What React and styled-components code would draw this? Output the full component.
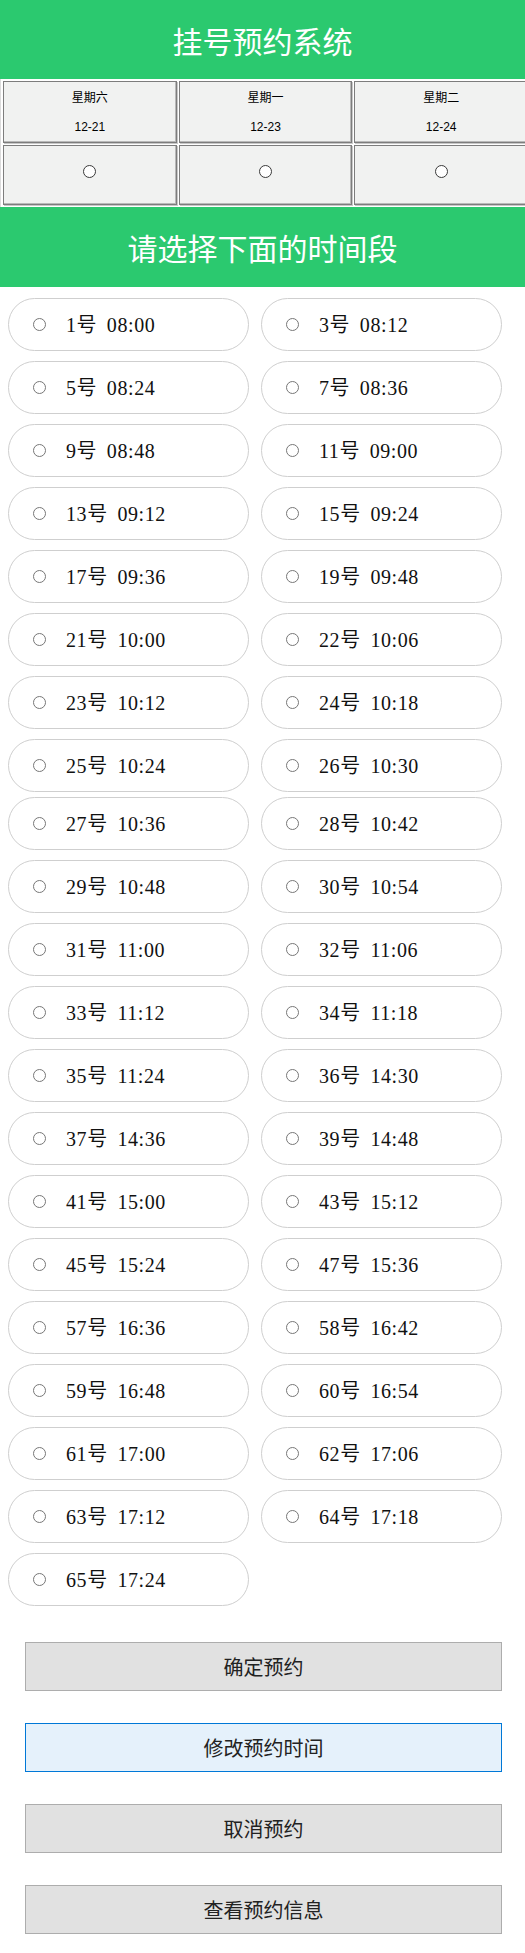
import React from "react";
import styled, { createGlobalStyle } from "styled-components";

const GlobalStyle = createGlobalStyle`
  html, body {
    margin: 0;
    padding: 0;
    background: #ffffff;
    overflow-x: hidden;
  }
  body {
    font-family: "Noto Sans CJK SC", "Liberation Sans", sans-serif;
  }
`;

const GREEN = "#2bc96f";

const Page = styled.div`
  width: 525px;
  padding-bottom: 20px;
`;

const Banner = styled.header`
  height: ${(p) => p.$h}px;
  background: ${GREEN};
  display: flex;
  align-items: center;
  justify-content: center;
  color: #ffffff;
  font-family: "Noto Sans CJK SC", sans-serif;
  font-size: 30px;
  font-weight: 400;
  letter-spacing: 0;
`;

const TableWrap = styled.div`
  width: 525px;
  overflow: hidden;
`;

const DayTable = styled.table`
  width: 530px;
  table-layout: fixed;
  border-collapse: separate;
  border-spacing: 2px;
  border-left: 1px solid #dcdcdc;
  background: #ffffff;
`;

const Cell = styled.td`
  height: ${(p) => p.$h}px;
  box-sizing: border-box;
  background: #f1f2f1;
  border: 1px solid #7d7d7d;
  box-shadow: inset -1px -1px 0 #b9b9b9, 1px 1px 0 #c8c8c8;
  text-align: center;
  vertical-align: middle;
  padding: 0;
  font-size: 12px;
  color: #000;
`;

const DayName = styled.div`
  font-family: "Noto Sans CJK SC", sans-serif;
  line-height: 15.5px;
  margin-bottom: 15.5px;
`;

const DayDate = styled.div`
  font-family: "Liberation Sans", sans-serif;
  line-height: 15.5px;
`;

const DayRadio = styled.input.attrs({ type: "radio" })`
  appearance: none;
  -webkit-appearance: none;
  width: 13px;
  height: 13px;
  box-sizing: border-box;
  border: 1.4px solid #3a3a3a;
  border-radius: 50%;
  background: #fff;
  margin: 0 0 8px 0;
  vertical-align: middle;
`;

const SlotGrid = styled.div`
  display: grid;
  grid-template-columns: 241px 241px;
  column-gap: 12px;
  padding: 11px 0 0 8px;
`;

const Slot = styled.label`
  height: 53px;
  box-sizing: border-box;
  border: 1px solid #cfcfcf;
  border-radius: 27px;
  margin-bottom: ${(p) => (p.$tight ? 5 : 10)}px;
  display: flex;
  align-items: center;
  padding-left: 24px;
  background: #fff;
  cursor: pointer;
`;

const SlotRadio = styled.input.attrs({ type: "radio" })`
  appearance: none;
  -webkit-appearance: none;
  width: 13px;
  height: 13px;
  box-sizing: border-box;
  border: 1.5px solid #777777;
  border-radius: 50%;
  background: #fff;
  margin: 0 20px 0 0;
  flex: none;
`;

const SlotText = styled.span`
  font-family: "Liberation Serif", "Noto Sans CJK SC", serif;
  font-size: 20px;
  color: #111;
  letter-spacing: 0.6px;
  word-spacing: 4px;
  white-space: pre;
  line-height: 1;
`;

const Actions = styled.div`
  display: flex;
  flex-direction: column;
  gap: 32px;
  margin-top: 26px;
  padding-left: 25px;
`;

const ActionButton = styled.button`
  width: 477px;
  height: 49px;
  box-sizing: border-box;
  border: 1px solid ${(p) => (p.$active ? "#0078d7" : "#adadad")};
  background: ${(p) => (p.$active ? "#e5f1fb" : "#e1e1e1")};
  font-family: "Noto Sans CJK SC", sans-serif;
  font-size: 20px;
  color: #222;
  padding: 0;
  cursor: pointer;
`;

const days = [
  { name: "星期六", date: "12-21" },
  { name: "星期一", date: "12-23" },
  { name: "星期二", date: "12-24" },
];

const slots = [
  [1, "08:00"], [3, "08:12"],
  [5, "08:24"], [7, "08:36"],
  [9, "08:48"], [11, "09:00"],
  [13, "09:12"], [15, "09:24"],
  [17, "09:36"], [19, "09:48"],
  [21, "10:00"], [22, "10:06"],
  [23, "10:12"], [24, "10:18"],
  [25, "10:24"], [26, "10:30"],
  [27, "10:36"], [28, "10:42"],
  [29, "10:48"], [30, "10:54"],
  [31, "11:00"], [32, "11:06"],
  [33, "11:12"], [34, "11:18"],
  [35, "11:24"], [36, "14:30"],
  [37, "14:36"], [39, "14:48"],
  [41, "15:00"], [43, "15:12"],
  [45, "15:24"], [47, "15:36"],
  [57, "16:36"], [58, "16:42"],
  [59, "16:48"], [60, "16:54"],
  [61, "17:00"], [62, "17:06"],
  [63, "17:12"], [64, "17:18"],
  [65, "17:24"],
];

const actions = ["确定预约", "修改预约时间", "取消预约", "查看预约信息"];

export default function App() {
  return (
    <Page>
      <GlobalStyle />
      <Banner $h={79}>挂号预约系统</Banner>
      <TableWrap>
        <DayTable>
          <tbody>
            <tr>
              {days.map((d) => (
                <Cell key={d.date} $h={62}>
                  <DayName>{d.name}</DayName>
                  <DayDate>{d.date}</DayDate>
                </Cell>
              ))}
            </tr>
            <tr>
              {days.map((d) => (
                <Cell key={d.date} $h={60}>
                  <DayRadio name="day" />
                </Cell>
              ))}
            </tr>
          </tbody>
        </DayTable>
      </TableWrap>
      <Banner $h={80}>请选择下面的时间段</Banner>
      <SlotGrid>
        {slots.map(([n, t]) => (
          <Slot key={n} $tight={n === 25 || n === 26}>
            <SlotRadio name="slot" />
            <SlotText>{`${n}号 ${t}`}</SlotText>
          </Slot>
        ))}
      </SlotGrid>
      <Actions>
        {actions.map((a, i) => (
          <ActionButton key={a} $active={i === 1}>
            {a}
          </ActionButton>
        ))}
      </Actions>
    </Page>
  );
}
